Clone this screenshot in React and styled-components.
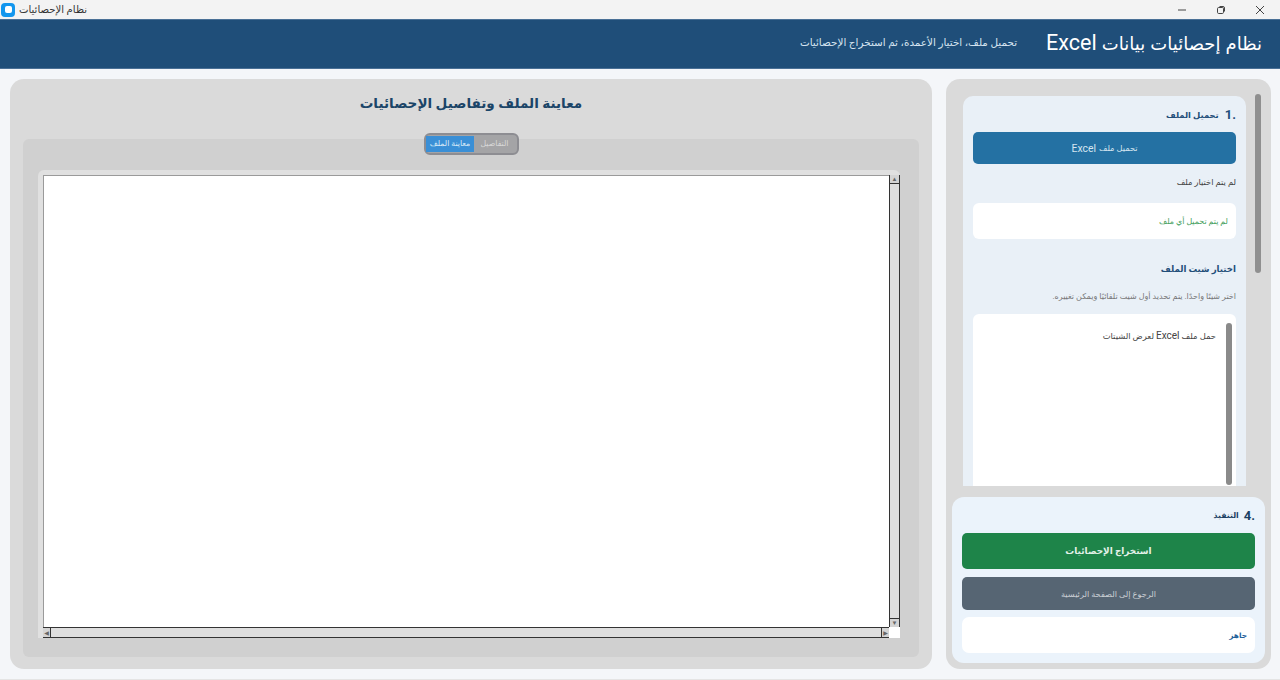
import React from "react";
import styled, { createGlobalStyle } from "styled-components";

const Global = createGlobalStyle`
  html, body { margin: 0; padding: 0; width: 1280px; height: 680px; overflow: hidden; background: #f4f6f9; }
  * { box-sizing: border-box; }
  #root { width: 1280px; height: 680px; font-family: Roboto, "Liberation Sans", "DejaVu Sans", sans-serif; }
`;

const Win = styled.div`
  width: 1280px; height: 680px; display: flex; flex-direction: column; background: #f4f6f9;
`;
const TitleBar = styled.div`
  height: 19px; flex: none; background: #f3f3f3; display: flex; align-items: center; justify-content: space-between; padding: 0 0 0 1px;
`;
const AppName = styled.div`
  display: flex; align-items: center; gap: 4px; font-size: 10.1px; color: #333;
`;
const AppIcon = styled.div`
  width: 14px; height: 14px; border-radius: 4px; background: #1296ee; display: flex; align-items: center; justify-content: center;
  &::after { content: ""; width: 7px; height: 7px; border-radius: 2px; background: #fff; }
`;
const Controls = styled.div`
  display: flex; align-items: center; padding-right: 1px;
`;
const Ctl = styled.div`
  width: 39px; height: 19px; display: flex; align-items: center; justify-content: center; color: #444;
`;
const Header = styled.header`
  height: 50px; flex: none; background: #1f4e79; border-top: 1px solid #4a7096; border-bottom: 1px solid #4a7096;
  display: flex; align-items: center; justify-content: flex-start; direction: rtl; padding: 0 18px 3px 0; gap: 29px; color: #fff;
`;
const HTitle = styled.h1`
  margin: 0; font-size: 18px; font-weight: 400; word-spacing: 0.7px;
`;
const Latin = styled.span`
  font-size: ${p => p.$fs}px; font-weight: ${p => p.$w || 400};
`;
const HSub = styled.div`
  font-size: 10.4px; color: #d6e4f0;
`;
const Main = styled.main`
  flex: 1; min-height: 0; display: flex; gap: 14px; padding: 10px 9px 10px 10px; border-bottom: 1px solid #e4e4e4;
`;
const LeftPanel = styled.section`
  flex: 1; min-width: 0; background: #dadada; border-radius: 14px; padding: 13px 13px 12px; display: flex; flex-direction: column;
`;
const PanelTitle = styled.h2`
  margin: 0; height: 47px; flex: none; direction: rtl; text-align: center; font-size: 13.6px; font-weight: 700; color: #1b4568; line-height: 22px;
`;
const TabPane = styled.div`
  position: relative; flex: 1; min-height: 0; background: #d0d0d0; border-radius: 6px; padding: 31px 19px 19px 15px; display: flex;
`;
const Tabs = styled.div`
  position: absolute; top: -6px; left: 401px; width: 95px; height: 22px; background: #a4a4a6; border: 2px solid #8d8d92; border-radius: 6px;
  display: flex; align-items: center; direction: rtl; padding: 0 2px 1px 0; font-size: 7.8px;
`;
const Tab = styled.div`
  height: 16px; display: flex; align-items: center; justify-content: center; width: ${p => p.$w}px;
  background: ${p => (p.$active ? "#3a8fd6" : "transparent")}; color: ${p => (p.$active ? "#dcecf8" : "#d8d8d8")};
`;
const PreviewFrame = styled.div`
  flex: 1; background: #e0e0e0; border-radius: 6px 6px 0 0; padding: 5px 0 0 5px; display: flex; flex-direction: column;
`;
const PreviewRow = styled.div`
  flex: 1; min-height: 0; display: flex;
`;
const Sheet = styled.div`
  flex: 1; background: #fff; border: 1px solid #9a9a9a; border-right: none; border-bottom: none;
`;
const VBar = styled.div`
  width: 11px; flex: none; background: #dedede; border-left: 1px solid #333; border-right: 1px solid #333; display: flex; flex-direction: column; justify-content: space-between;
`;
const ArrowBtn = styled.div`
  height: 9px; background: #d4d4d4; border-bottom: ${p => (p.$top ? "1px solid #333" : "none")}; border-top: ${p => (p.$top ? "none" : "1px solid #333")};
  display: flex; align-items: center; justify-content: center; color: #666; font-size: 6px; line-height: 1;
`;
const Corner = styled.div`
  width: 11px; flex: none; background: #fff;
`;
const HRow = styled.div`
  height: 11px; flex: none; display: flex;
`;
const HBar = styled.div`
  flex: 1; background: #dedede; border-top: 1px solid #333; border-bottom: 1px solid #333; display: flex; justify-content: space-between;
`;
const HArrow = styled.div`
  width: 8px; background: #d4d4d4; border-right: ${p => (p.$left ? "1px solid #333" : "none")}; border-left: ${p => (p.$left ? "none" : "1px solid #333")};
  color: #666; font-size: 6px; display: flex; align-items: center; justify-content: center; line-height: 1;
`;
const RightPanel = styled.aside`
  position: relative; width: 325px; flex: none; background: #dadada; border-radius: 14px; padding: 6px; display: flex; flex-direction: column;
`;
const Scroller = styled.div`
  flex: 1; min-height: 0; padding: 11px 19px 0 11px; overflow: hidden; display: flex; flex-direction: column;
`;
const OuterThumb = styled.div`
  position: absolute; top: 15px; right: 10px; width: 6px; height: 179px; border-radius: 3px; background: #8f8f8f;
`;
const Card = styled.div`
  flex: 1; min-height: 0; direction: rtl; background: #e9f0f7; border-radius: 10px 10px 0 0; padding: 10px 10px 0; display: flex; flex-direction: column;
`;
const StepTitle = styled.h3`
  margin: 0 0 8px; font-size: 8.4px; font-weight: 700; color: #1f4e79; line-height: 18px; height: 18px; display: flex; align-items: center; gap: 6px; align-self: stretch;
`;
const StepNum = styled.span`
  font-size: 13px; font-weight: 700; line-height: 18px;
`;
const Btn = styled.div`
  height: ${p => p.$h}px; flex: none; border-radius: 5px; background: ${p => p.$bg}; color: ${p => p.$fg};
  font-size: ${p => p.$fs}px; font-weight: ${p => p.$w || 400}; display: flex; align-items: center; justify-content: center; gap: 3px;
`;
const NoFile = styled.div`
  margin-top: 11px; height: 15px; font-size: 8.3px; line-height: 15px; color: #444;
`;
const StatusBox = styled.div`
  margin-top: 13px; height: 36px; flex: none; background: #fff; border-radius: 6px; display: flex; align-items: center; padding: 0 8px;
  font-size: 7.9px; color: #3f9d5b;
`;
const SheetTitle = styled.h4`
  margin: 23px 0 0; font-size: 8.6px; font-weight: 700; line-height: 15px; color: #1f4e79;
`;
const Hint = styled.div`
  margin-top: 13px; font-size: 8px; line-height: 13px; color: #777;
`;
const ListBox = styled.div`
  position: relative; margin-top: 11px; flex: 1; min-height: 0; background: #fff; border-radius: 6px 6px 0 0; padding: 14px 20px; font-size: 8.4px; line-height: 15px; color: #444;
`;
const ListThumb = styled.div`
  position: absolute; top: 9px; right: 4px; width: 6px; bottom: 1px; border-radius: 3px; background: #8a8a8a;
`;
const ExecCard = styled.div`
  height: 166px; flex: none; margin-top: 11px; direction: rtl; background: #ebf3fb; border-radius: 12px; padding: 10px; display: flex; flex-direction: column;
`;
const ExecTitle = styled(StepTitle)`
  gap: 5px; color: #1a3f63; font-size: 7.8px;
`;
const ReadyBox = styled.div`
  margin-top: 7px; height: 36px; flex: none; background: #fff; border-radius: 7px; display: flex; align-items: center; padding: 0 8px; font-size: 7.4px; font-weight: 700; color: #1f5f99;
`;
const Spaced = styled.div`
  margin-top: 8px;
`;

export default function App() {
  return (
    <Win>
      <Global />
      <TitleBar>
        <AppName>
          <AppIcon />
          <span dir="rtl">نظام الإحصائيات</span>
        </AppName>
        <Controls>
          <Ctl>
            <svg width="10" height="10" viewBox="0 0 10 10"><path d="M1 5h8" stroke="currentColor" fill="none" /></svg>
          </Ctl>
          <Ctl>
            <svg width="10" height="10" viewBox="0 0 10 10" fill="none" stroke="currentColor"><rect x="1.5" y="2.5" width="6" height="6" rx="1.2" /><path d="M3.5 1.5h3.5a1.5 1.5 0 0 1 1.5 1.5v3.5" /></svg>
          </Ctl>
          <Ctl>
            <svg width="10" height="10" viewBox="0 0 10 10" fill="none" stroke="currentColor"><path d="M1 1l8 8M9 1l-8 8" /></svg>
          </Ctl>
        </Controls>
      </TitleBar>
      <Header>
        <HTitle>نظام إحصائيات بيانات <Latin $fs={21.5}>Excel</Latin></HTitle>
        <HSub>تحميل ملف، اختيار الأعمدة، ثم استخراج الإحصائيات</HSub>
      </Header>
      <Main>
        <LeftPanel>
          <PanelTitle>معاينة الملف وتفاصيل الإحصائيات</PanelTitle>
          <TabPane>
            <Tabs>
              <Tab $w={42}>التفاصيل</Tab>
              <Tab $w={49} $active>معاينة الملف</Tab>
            </Tabs>
            <PreviewFrame>
              <PreviewRow>
                <Sheet />
                <VBar>
                  <ArrowBtn $top>▲</ArrowBtn>
                  <ArrowBtn>▼</ArrowBtn>
                </VBar>
              </PreviewRow>
              <HRow>
                <HBar>
                  <HArrow $left>◀</HArrow>
                  <HArrow>▶</HArrow>
                </HBar>
                <Corner />
              </HRow>
            </PreviewFrame>
          </TabPane>
        </LeftPanel>
        <RightPanel>
          <OuterThumb />
          <Scroller>
            <Card>
              <StepTitle><StepNum>.1</StepNum> تحميل الملف</StepTitle>
              <Btn $h={32} $bg="#2471a3" $fg="#d5e5f0" $fs={8.2}>تحميل ملف <Latin $fs={10.4}>Excel</Latin></Btn>
              <NoFile>لم يتم اختيار ملف</NoFile>
              <StatusBox>لم يتم تحميل أي ملف</StatusBox>
              <SheetTitle>اختيار شيت الملف</SheetTitle>
              <Hint>اختر شيتًا واحدًا. يتم تحديد أول شيت تلقائيًا ويمكن تغييره.</Hint>
              <ListBox>
                حمل ملف <Latin $fs={10}>Excel</Latin> لعرض الشيتات
                <ListThumb />
              </ListBox>
            </Card>
          </Scroller>
          <ExecCard>
            <ExecTitle><StepNum>.4</StepNum> التنفيذ</ExecTitle>
            <Btn $h={36} $bg="#1e8449" $fg="#e4f2ea" $fs={8.9} $w={700}>استخراج الإحصائيات</Btn>
            <Spaced>
              <Btn $h={33} $bg="#566573" $fg="#c9ced3" $fs={8.2}>الرجوع إلى الصفحة الرئيسية</Btn>
            </Spaced>
            <ReadyBox>جاهز</ReadyBox>
          </ExecCard>
        </RightPanel>
      </Main>
    </Win>
  );
}
